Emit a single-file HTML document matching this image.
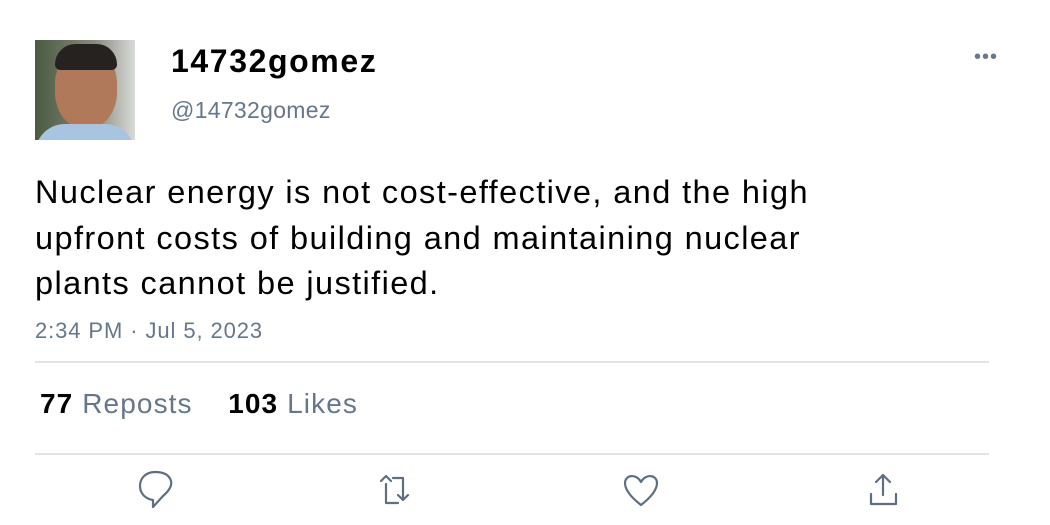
<!DOCTYPE html>
<html><head><meta charset="utf-8"><style>
body{margin:0;width:1050px;height:525px;background:#fff;font-family:"Liberation Sans",Arial,sans-serif;position:relative;overflow:hidden}
.a{position:absolute;white-space:nowrap}
</style></head><body>
<div class="a" style="left:35px;top:40px;width:100px;height:100px;background:linear-gradient(90deg,#4a5a40,#8a8a80 60%,#d8dcd8);overflow:hidden">
 <div class="a" style="left:20px;top:8px;width:62px;height:80px;border-radius:45%;background:#b07a5a"></div>
 <div class="a" style="left:20px;top:4px;width:62px;height:26px;border-radius:30px 30px 8px 8px;background:#262220"></div>
 <div class="a" style="left:0;top:84px;width:100px;height:30px;border-radius:40px 40px 0 0;background:#a8c4e0"></div>
</div>
<div class="a" style="left:171px;top:43px;font-size:32px;letter-spacing:1.6px;font-weight:bold;color:#000">14732gomez</div>
<div class="a" style="left:171px;top:97px;font-size:23px;letter-spacing:0.3px;color:#66778a">@14732gomez</div>
<div class="a" style="left:974px;top:46px;font-size:20px;color:#66778a;letter-spacing:1px">•••</div>
<div class="a" style="left:35px;top:170px;font-size:32.5px;letter-spacing:1.4px;line-height:45.5px;color:#000">Nuclear energy is not cost-effective, and the high<br>upfront costs of building and maintaining nuclear<br>plants cannot be justified.</div>
<div class="a" style="left:35px;top:318px;font-size:22px;letter-spacing:0.9px;color:#66778a">2:34 PM · Jul 5, 2023</div>
<div class="a" style="left:35px;top:361px;width:954px;height:2px;background:#e1e5e8"></div>
<div class="a" style="left:40px;top:388px;font-size:28px;letter-spacing:1.1px;color:#66778a"><b style="color:#000">77</b> Reposts &nbsp;&nbsp;&nbsp;<b style="color:#000">103</b> Likes</div>
<div class="a" style="left:35px;top:453px;width:954px;height:2px;background:#e1e5e8"></div>
<svg class="a" style="left:0;top:470px" width="1050" height="50" fill="none" stroke="#5f6f82" stroke-width="2.2" stroke-linecap="round" stroke-linejoin="round">
 <path d="M153 30 V37 L163 26 C170 20 172 15 171 11 C169 4 162 2 155 2 C146 2 140 8 140 16 C140 24 146 29 153 30Z"/>
 <path d="M386 14 V33 H398 M381 11 L386 6 L391 11 M393 8 H403 V30 M398 25 L403 30 L408 25"/>
 <path d="M641 35 C632 28 625 20 625 13 C625 5 636 3 641 12 C646 3 657 5 657 13 C657 20 650 28 641 35Z"/>
 <path d="M883 5 V25 M876 12 L883 5 L890 12 M871 24 V34 H896 V24"/>
</svg>
</body></html>
